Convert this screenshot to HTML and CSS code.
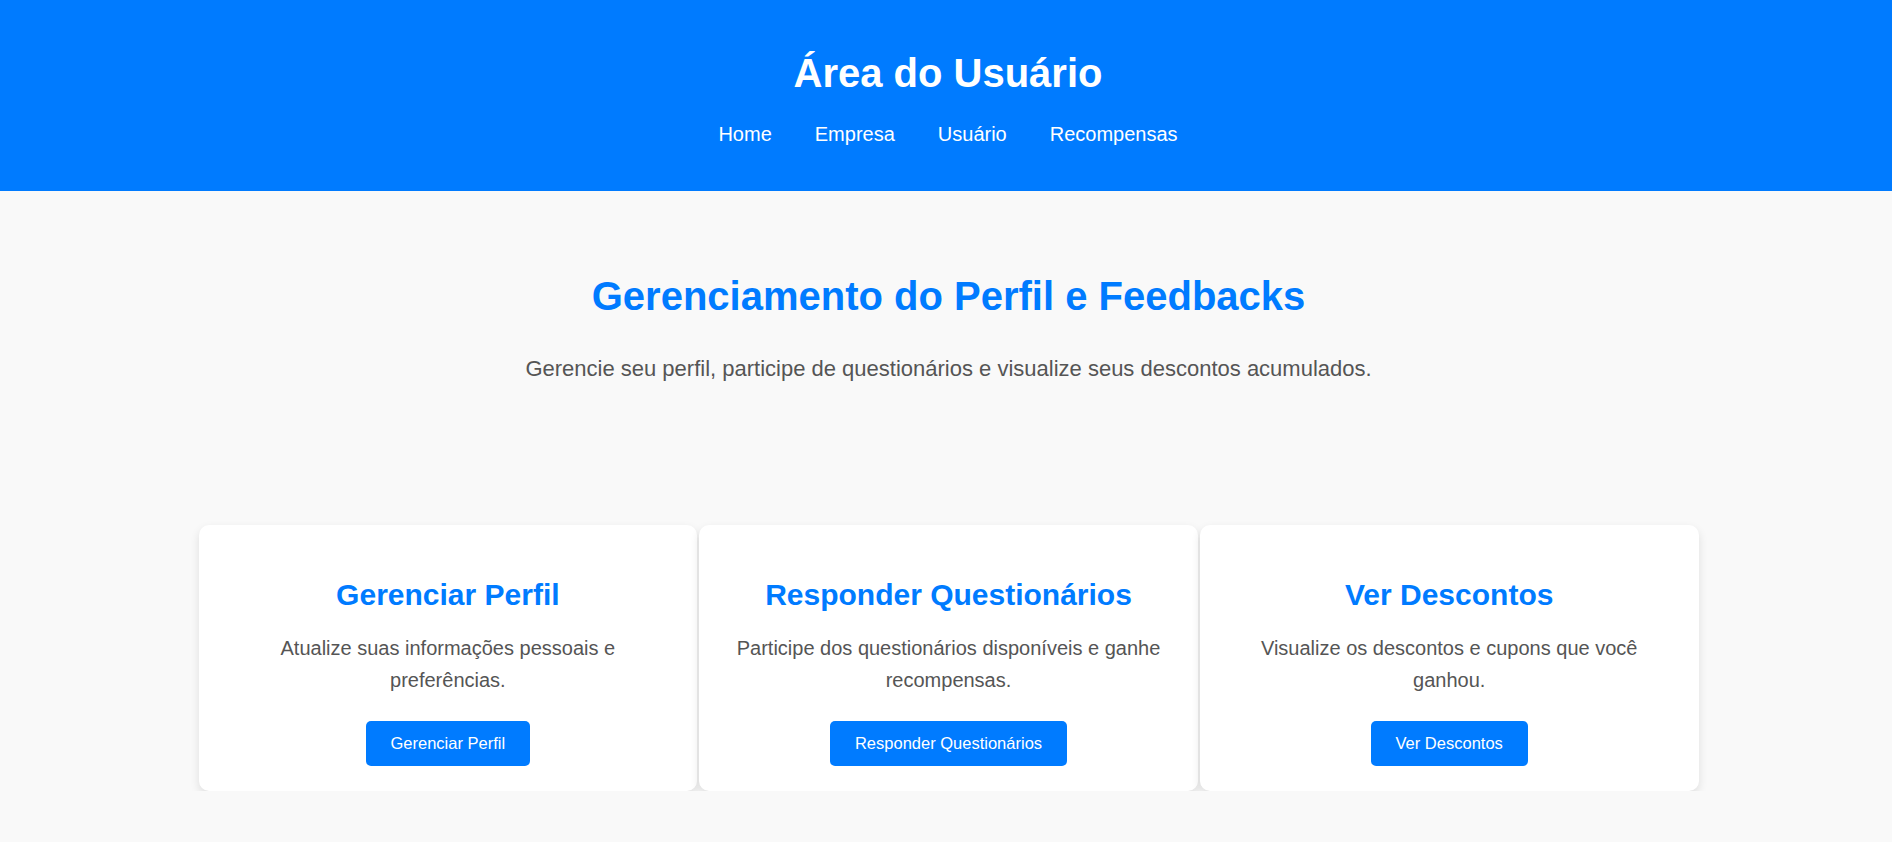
FILE: index.html
```html
<!DOCTYPE html>
<html lang="pt-BR">
<head>
<meta charset="utf-8">
<title>Área do Usuário</title>
<link rel="stylesheet" href="styles.css">
</head>
<body>
<header class="site-header">
  <h1 class="site-title">Área do Usuário</h1>
  <nav class="site-nav">
    <a href="#" class="nav-link">Home</a>
    <a href="#" class="nav-link">Empresa</a>
    <a href="#" class="nav-link">Usuário</a>
    <a href="#" class="nav-link">Recompensas</a>
  </nav>
</header>
<main class="page">
  <section class="hero">
    <h2 class="hero-title">Gerenciamento do Perfil e Feedbacks</h2>
    <p class="hero-text">Gerencie seu perfil, participe de questionários e visualize seus descontos acumulados.</p>
  </section>
  <section class="cards">
    <div class="card">
      <h3 class="card-title">Gerenciar Perfil</h3>
      <p class="card-text">Atualize suas informações pessoais e preferências.</p>
      <a href="#" class="btn">Gerenciar Perfil</a>
    </div>
    <div class="card">
      <h3 class="card-title">Responder Questionários</h3>
      <p class="card-text">Participe dos questionários disponíveis e ganhe recompensas.</p>
      <a href="#" class="btn">Responder Questionários</a>
    </div>
    <div class="card">
      <h3 class="card-title">Ver Descontos</h3>
      <p class="card-text">Visualize os descontos e cupons que você ganhou.</p>
      <a href="#" class="btn">Ver Descontos</a>
    </div>
  </section>
</main>
</body>
</html>
```
FILE: styles.css
```css
* {
  box-sizing: border-box;
}

html, body {
  margin: 0;
  padding: 0;
}

body {
  font-family: "Liberation Sans", Arial, sans-serif;
  background: #f9f9f9;
  color: #333;
}

.site-header {
  background: #007bff;
  color: #fff;
  text-align: center;
  padding: 20px 0 20px 4px;
  height: 191px;
}

.site-title {
  margin: 30px 0 27px;
  font-size: 40px;
  line-height: 46px;
  font-weight: bold;
}

.site-nav {
  display: flex;
  justify-content: center;
  gap: 43px;
  font-size: 20px;
  line-height: 23px;
}

.nav-link {
  color: #fff;
  text-decoration: none;
}

.page {
  padding-left: 5px;
}

.hero {
  text-align: center;
  padding-top: 82px;
}

.hero-title {
  margin: 0 0 37px;
  font-size: 40px;
  line-height: 46px;
  font-weight: bold;
  color: #007bff;
}

.hero-text {
  margin: 0;
  font-size: 22px;
  line-height: 25px;
  color: #555;
}

.cards {
  width: 1500px;
  margin: 144px auto 0;
  display: flex;
  gap: 2px;
}

.card {
  flex: 1;
  background: #fff;
  border-radius: 10px;
  box-shadow: 0 4px 10px rgba(0, 0, 0, 0.11);
  padding: 24px 30px 25px;
  display: flex;
  flex-direction: column;
  align-items: center;
  text-align: center;
}

.card-title {
  margin: 28px 0 19px;
  font-size: 30px;
  line-height: 36px;
  font-weight: bold;
  color: #007bff;
}

.card-text {
  margin: 0 0 25px;
  font-size: 20px;
  line-height: 32px;
  color: #555;
}

.btn {
  display: block;
  background: #007bff;
  color: #fff;
  text-decoration: none;
  font-size: 16.5px;
  line-height: 20.6px;
  padding: 12px 25px;
  border-radius: 5px;
}
```
